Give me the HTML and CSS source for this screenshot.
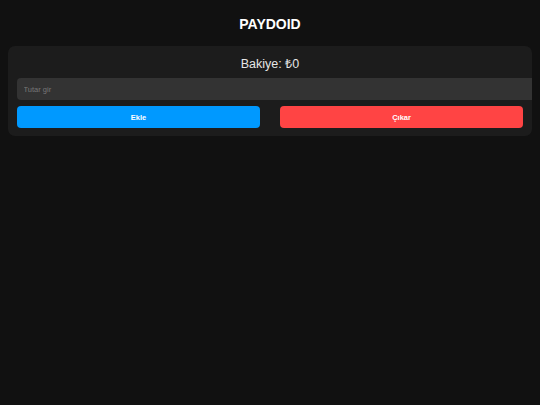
FILE: index.html
```html
<!DOCTYPE html>
<html lang="tr">
    <head>
        <meta charset="utf-8">
        <meta name="viewport" content="width=device-width, initial-scale=1">
        <title>Paydoid</title>
        <link rel="stylesheet" href="styles.css">
    </head>
    <body>

    <h1 class="title">PAYDOID</h1>

    <div class="wallet">
        <p class="balance">Bakiye: ₺<span id="balance">0</span></p>
        <input class="amount" id="amount" type="text" placeholder="Tutar gir">
        <div class="actions">
            <button class="btn btn--add" id="add">Ekle</button>
            <button class="btn btn--sub" id="sub">Çıkar</button>
        </div>
    </div>

    <script>
    let balance = 0;
    const balance_el = document.getElementById('balance');
    const amount_el = document.getElementById('amount');

    function update(sign) {
       const value = parseFloat(amount_el.value);
       if (isNaN(value) || value <= 0) return false;
       balance += sign * value;
       balance_el.textContent = balance;
       amount_el.value = '';
    }

    document.getElementById('add').addEventListener('click', () => update(1));
    document.getElementById('sub').addEventListener('click', () => update(-1));
    </script>
    </body>
</html>
```

FILE: styles.css
```css
body {
   margin: 8px;
   background: #111111;
   color: #eeeeee;
   font-family: "Liberation Sans", Arial, sans-serif;
}

.title {
   margin: 8px 0 14px;
   font-size: 14px;
   font-weight: bold;
   color: #ffffff;
   text-align: center;
}

.wallet {
   background: #1c1c1c;
   border-radius: 7px;
   padding: 9px 9px 8px;
}

.balance {
   margin: 0 0 6px;
   font-size: 12.5px;
   text-align: center;
   color: #e6e6e6;
}

.amount {
   display: block;
   box-sizing: border-box;
   width: calc(100% + 13px);
   height: 22px;
   margin: 0;
   padding: 0 6.5px;
   border: 0;
   border-radius: 4px;
   background: #333333;
   color: #eeeeee;
   font-family: inherit;
   font-size: 7.5px;
   outline: none;
}

.amount::placeholder {
   color: #777777;
}

.actions {
   display: flex;
   justify-content: space-between;
   margin-top: 6px;
}

.btn {
   width: 48%;
   height: 22px;
   border: 0;
   border-radius: 4px;
   color: #ffffff;
   font-family: inherit;
   font-size: 7.5px;
   font-weight: bold;
   cursor: pointer;
}

.btn--add {
   background: #0099ff;
}

.btn--sub {
   background: #ff4444;
}
```
